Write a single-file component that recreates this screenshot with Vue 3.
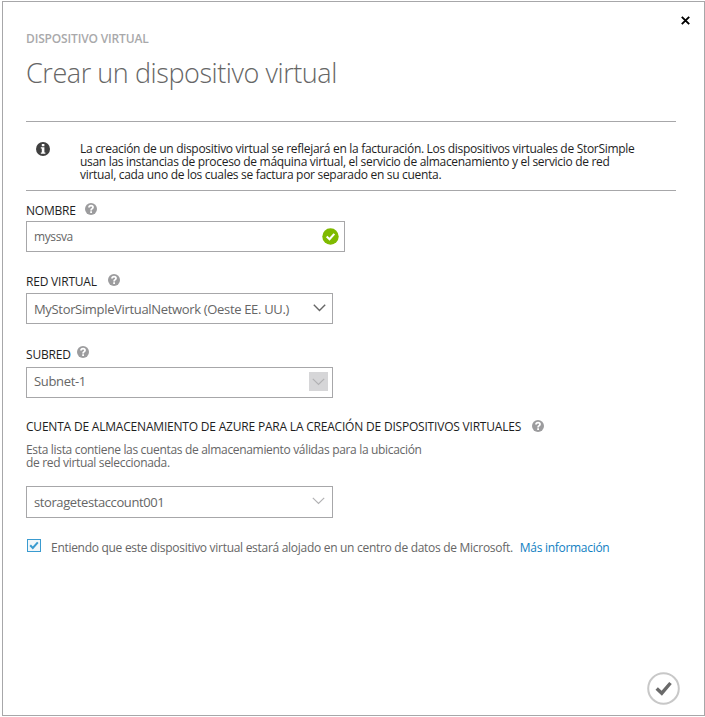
<script setup>
import { ref } from 'vue'

const name = ref('myssva')
const network = 'MyStorSimpleVirtualNetwork (Oeste EE. UU.)'
const subnet = 'Subnet-1'
const account = 'storagetestaccount001'
const accepted = ref(true)
</script>

<template>
  <main class="dialog">
    <header class="head">
      <button class="close" type="button">
        <svg width="9" height="9" viewBox="0 0 9 9"><path d="M.8 .8L8.2 8.2M8.2 .8L.8 8.2" /></svg>
      </button>
      <p class="eyebrow">DISPOSITIVO VIRTUAL</p>
      <h1 class="title">Crear un dispositivo virtual</h1>
    </header>

    <section class="notice">
      <svg class="info" width="14" height="14" viewBox="0 0 14 14">
        <circle cx="7" cy="7" r="7" />
        <path d="M5.8 2h2.6v2.2H5.8zM4.8 5.2h3.6v5.2h1v1.3H4.8v-1.3h1V6.5h-1z" />
      </svg>
      <p>
        La creación de un dispositivo virtual se reflejará en la facturación. Los dispositivos virtuales de StorSimple<br>
        usan las instancias de proceso de máquina virtual, el servicio de almacenamiento y el servicio de red<br>
        virtual, cada uno de los cuales se factura por separado en su cuenta.
      </p>
    </section>

    <div class="field name">
      <div class="label">
        <span>NOMBRE</span>
        <svg class="help" viewBox="0 0 12 12"><circle cx="6" cy="6" r="6" /><path d="M4 4.5Q4.1 2.6 6.1 2.6Q8 2.6 8 4.3Q8 5.2 7 5.8Q6.1 6.3 6.1 7.4M6.1 8.2V9.9" /></svg>
      </div>
      <div class="box">
        <span class="value">{{ name }}</span>
        <svg class="valid" width="17" height="17" viewBox="0 0 17 17"><circle cx="8.5" cy="8.5" r="8.2" /><path d="M4.7 8.6L7.5 11.2L12.3 5.9" /></svg>
      </div>
    </div>

    <div class="field network">
      <div class="label">
        <span>RED VIRTUAL</span>
        <svg class="help" viewBox="0 0 12 12"><circle cx="6" cy="6" r="6" /><path d="M4 4.5Q4.1 2.6 6.1 2.6Q8 2.6 8 4.3Q8 5.2 7 5.8Q6.1 6.3 6.1 7.4M6.1 8.2V9.9" /></svg>
      </div>
      <div class="box">
        <span class="value">{{ network }}</span>
        <span class="arrow"><svg width="13" height="8" viewBox="0 0 13 8"><path d="M.8 .8L6.5 6.5L12.2 .8" /></svg></span>
      </div>
    </div>

    <div class="field subnet">
      <div class="label">
        <span>SUBRED</span>
        <svg class="help" viewBox="0 0 12 12"><circle cx="6" cy="6" r="6" /><path d="M4 4.5Q4.1 2.6 6.1 2.6Q8 2.6 8 4.3Q8 5.2 7 5.8Q6.1 6.3 6.1 7.4M6.1 8.2V9.9" /></svg>
      </div>
      <div class="box">
        <span class="value">{{ subnet }}</span>
        <span class="arrow"><svg width="13" height="8" viewBox="0 0 13 8"><path d="M.8 .8L6.5 6.5L12.2 .8" /></svg></span>
      </div>
    </div>

    <div class="field account">
      <div class="label">
        <span>CUENTA DE ALMACENAMIENTO DE AZURE PARA LA CREACIÓN DE DISPOSITIVOS VIRTUALES</span>
        <svg class="help" viewBox="0 0 12 12"><circle cx="6" cy="6" r="6" /><path d="M4 4.5Q4.1 2.6 6.1 2.6Q8 2.6 8 4.3Q8 5.2 7 5.8Q6.1 6.3 6.1 7.4M6.1 8.2V9.9" /></svg>
      </div>
      <p class="hint">
        Esta lista contiene las cuentas de almacenamiento válidas para la ubicación<br>
        de red virtual seleccionada.
      </p>
      <div class="box">
        <span class="value">{{ account }}</span>
        <span class="arrow"><svg width="13" height="8" viewBox="0 0 13 8"><path d="M.8 .8L6.5 6.5L12.2 .8" /></svg></span>
      </div>
    </div>

    <div class="consent">
      <span class="check" @click="accepted = !accepted">
        <svg v-if="accepted" width="10" height="9" viewBox="0 0 10 9"><path d="M1.2 4.3L3.8 7L8.8 1.4" /></svg>
      </span>
      <span>Entiendo que este dispositivo virtual estará alojado en un centro de datos de Microsoft.</span>
      <a class="more">Más información</a>
    </div>

    <footer class="foot">
      <svg width="33" height="33" viewBox="0 0 33 33">
        <circle cx="16.5" cy="16.5" r="15.3" />
        <path d="M9.7 16.4L14.8 21.2L23.5 11" />
      </svg>
    </footer>
  </main>
</template>

<style>
body {
  background: #fff;
}
</style>

<style scoped>
.dialog {
  display: flex;
  flex-direction: column;
  box-sizing: border-box;
  width: 703px;
  height: 715px;
  margin: 1px 0 1px 2px;
  padding: 0 28px 0 23px;
  border: 1px solid #a7a7a9;
  background: #fff;
  color: #666;
  font-family: "Open Sans", "Noto Sans", sans-serif;
  font-size: 12px;
  line-height: 15px;
  position: relative;
  white-space: nowrap;
}
p, h1 { margin: 0; }
svg { display: block; flex: none; }
path { fill: none; }

.head { height: 119px; padding-top: 28px; box-sizing: border-box; }
.close {
  position: absolute;
  top: 14px;
  right: 14px;
  padding: 0;
  border: 0;
  background: none;
}
.close path { stroke: #000; stroke-width: 1.9; }
.eyebrow {
  color: #a9a9ab;
  font-size: 12px;
  font-weight: 600;
  line-height: 17px;
  letter-spacing: -0.16px;
}
.title {
  margin-top: 7px;
  color: #666;
  font-size: 27px;
  font-weight: 300;
  line-height: 37px;
  letter-spacing: -0.43px;
}

.notice {
  display: flex;
  gap: 30px;
  box-sizing: border-box;
  height: 70px;
  padding: 20px 0 0 10px;
  border: solid #a7a7a9;
  border-width: 1px 0;
  color: #1e1e1e;
  line-height: 13px;
  letter-spacing: -0.302px;
}
.info circle { fill: #404040; }
.info path { fill: #fff; }

.label {
  display: flex;
  color: #1e1e1e;
  font-size: 12px;
  line-height: 17px;
  letter-spacing: -0.2px;
}
.help { width: 12px; height: 12px; margin-left: 9px; }
.help circle { fill: #9c9c9e; }
.help path { stroke: #fff; stroke-width: 1.8; }

.box {
  display: flex;
  justify-content: space-between;
  box-sizing: border-box;
  width: 307px;
  height: 31px;
  padding: 6px 4px 0 7px;
  border: 1px solid #a7a7a9;
}
.value { font-size: 13px; line-height: 18px; letter-spacing: -0.33px; }
.arrow {
  display: flex;
  align-items: center;
  justify-content: center;
  width: 19px;
  height: 19px;
  margin-top: -2px;
}
.arrow path { stroke: #b2b2b4; stroke-width: 1.2; }

.name { padding-top: 11px; }
.name .help { margin-top: 1px; }
.name .box { width: 319px; margin-top: 2px; padding-right: 5px; }
.name .value { font-size: 12px; line-height: 17px; letter-spacing: -0.4px; }
.valid circle { fill: #7fba00; }
.valid path { stroke: #fff; stroke-width: 2.1; }

.network { padding-top: 21px; }
.network .help { margin: 1px 0 0 11px; }
.network .box { margin-top: 3px; padding-right: 3px; }
.network .arrow path { stroke: #666; stroke-width: 1.4; }

.subnet { padding-top: 22px; }
.subnet .help { margin-left: 6px; }
.subnet .box { margin-top: 4px; padding-top: 4px; }
.subnet .arrow { margin-top: 0; background: #d6d6d8; }

.account { padding-top: 20px; }
.account .help { margin: 2px 0 0 11px; }
.hint { margin-top: 8px; line-height: 13px; letter-spacing: -0.325px; }
.account .box { height: 32px; margin-top: 17px; }
.account .value { letter-spacing: -0.4px; }

.consent {
  display: flex;
  margin-top: 22px;
  padding-left: 1px;
  letter-spacing: -0.29px;
}
.check {
  display: flex;
  align-items: center;
  justify-content: center;
  box-sizing: border-box;
  width: 14px;
  height: 13px;
  margin: -1px 10px 0 0;
  border: 1px solid #3a9bd0;
  background: #f2f7fa;
}
.check path { stroke: #3a9bd0; stroke-width: 2; }
.more { margin-left: 7px; color: #0f80c2; }

.foot { display: flex; justify-content: flex-end; margin: auto -4px 10px 0; }
.foot circle { fill: none; stroke: #c8c8c8; stroke-width: 2; }
.foot path { stroke: #6a6a6a; stroke-width: 3.4; }
</style>
